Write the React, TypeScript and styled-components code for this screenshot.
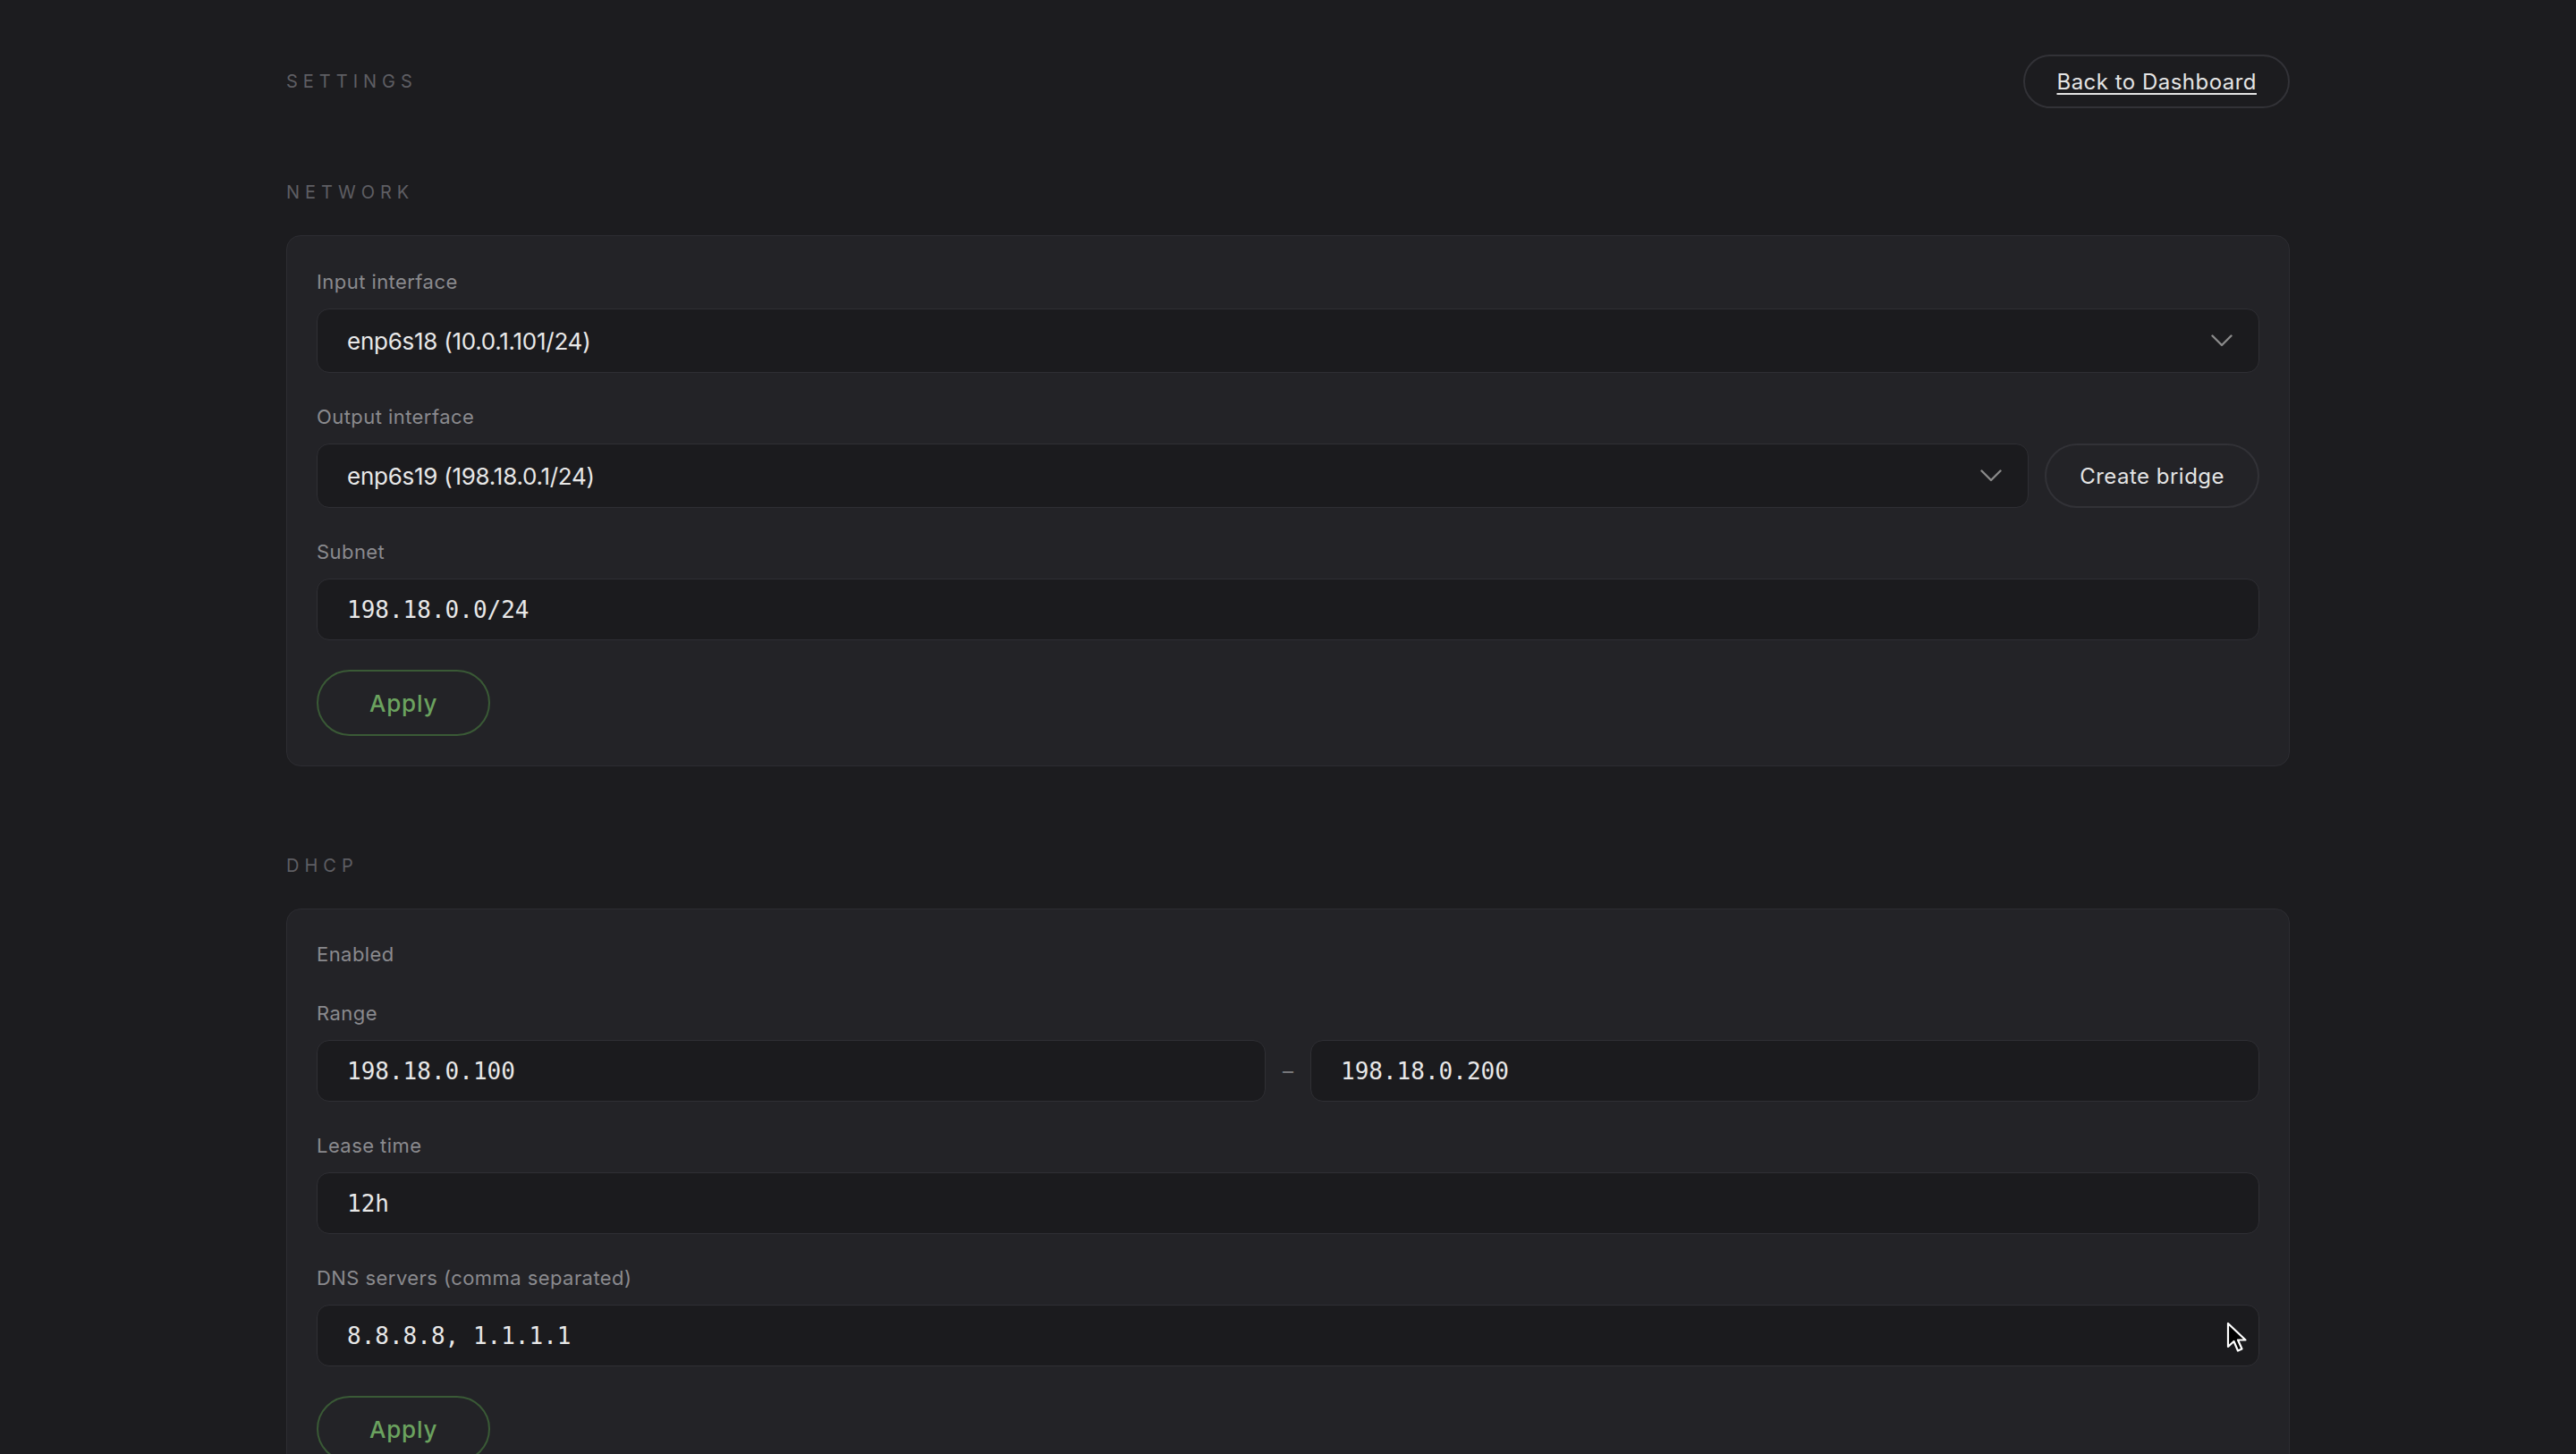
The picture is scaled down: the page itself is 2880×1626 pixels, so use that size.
import React from 'react'
import styled, { createGlobalStyle } from 'styled-components'

const GlobalStyle = createGlobalStyle`
    html, body {
        margin: 0;
        padding: 0;
        background: #1c1c1f;
    }
    body {
        font-family: Inter, "Noto Sans", sans-serif;
        color: #e6e6e6;
        -webkit-font-smoothing: antialiased;
    }
    * {
        box-sizing: border-box;
    }
`

const Page = styled.div`
    position: relative;
    min-height: 100vh;
    padding: 61px 0 120px;
`

const Container = styled.div`
    width: 2240px;
    margin: 0 auto;
`

const Header = styled.header`
    display: flex;
    justify-content: space-between;
    align-items: center;
    height: 60px;
    margin-bottom: 80px;
`

const Kicker = styled.h2`
    margin: 0;
    font-size: 20px;
    line-height: 28px;
    font-weight: 400;
    letter-spacing: 0.3em;
    text-transform: uppercase;
    color: #5e5e63;
`

const Section = styled.section`
    margin-bottom: 97px;

    ${Kicker} {
        margin-bottom: 34px;
    }
`

const Panel = styled.div`
    display: flex;
    flex-direction: column;
    gap: 31px;
    padding: 33px;
    background: #232327;
    border: 1px solid #2d2d32;
    border-radius: 16px;
`

const Field = styled.div`
    display: flex;
    flex-direction: column;
    gap: 12px;
`

const Label = styled.label`
    font-size: 22px;
    line-height: 36px;
    letter-spacing: 0.02em;
    color: #8a8a8e;
`

const ToggleLabel = styled.div`
    font-size: 22px;
    line-height: 34px;
    letter-spacing: 0.02em;
    color: #8a8a8e;
`

const SelectBox = styled.div`
    display: flex;
    align-items: center;
    justify-content: space-between;
    height: 72px;
    padding: 0 29px 0 33px;
    background: #1b1b1e;
    border: 1px solid #2f2f34;
    border-radius: 14px;
    font-size: 26px;
    letter-spacing: -0.01em;
    color: #e8e8e8;
`

const TextInput = styled.input`
    display: block;
    width: 100%;
    min-width: 0;
    height: 69px;
    padding: 0 33px;
    background: #1b1b1e;
    border: 1px solid #2f2f34;
    border-radius: 14px;
    font-family: "DejaVu Sans Mono", "Liberation Mono", monospace;
    font-size: 26px;
    color: #e8e8e8;
    outline: none;
`

const Row = styled.div`
    display: flex;
    align-items: center;
    gap: 18px;

    & > ${SelectBox}, & > ${TextInput} {
        flex: 1;
    }
`

const Dash = styled.span`
    width: 14px;
    text-align: center;
    font-size: 24px;
    color: #77777b;
`

const PillButton = styled.button<{ $height: number; $tone?: 'neutral' | 'green' }>`
    flex: none;
    height: ${p => p.$height}px;
    padding: 0 ${p => (p.$tone === 'green' ? 57 : 37)}px;
    border-radius: 999px;
    border: ${p => (p.$tone === 'green' ? '2px solid #3a5a36' : '2px solid #323237')};
    background: transparent;
    font-family: Inter, "Noto Sans", sans-serif;
    font-size: ${p => (p.$tone === 'green' ? 26 : 24)}px;
    font-weight: ${p => (p.$tone === 'green' ? 500 : 400)};
    letter-spacing: ${p => (p.$tone === 'green' ? '0.03em' : '0.02em')};
    color: ${p => (p.$tone === 'green' ? '#6ba25f' : '#e4e4e4')};
    white-space: nowrap;
    cursor: pointer;
`

const BackLink = styled(PillButton)`
    padding: 0 35px;
    text-decoration: underline;
    text-underline-offset: 4px;
    text-decoration-thickness: 2px;
`

const ApplyButton = styled(PillButton)`
    align-self: flex-start;
    margin-top: 2px;
`

const Pointer = styled.svg`
    position: absolute;
    left: 2489px;
    top: 1478px;
    pointer-events: none;
`

function Chevron() {
    return (
        <svg width="24" height="14" viewBox="0 0 24 14" fill="none">
            <polyline points="1.5,1.5 12,12 22.5,1.5" stroke="#8a8a8a" strokeWidth="2.4" strokeLinecap="round" strokeLinejoin="round" />
        </svg>
    )
}

function Select({ value }: { value: string }) {
    return (
        <SelectBox>
            <span>{value}</span>
            <Chevron />
        </SelectBox>
    )
}

function App() {
    return (
        <>
            <GlobalStyle />
            <Page>
                <Container>
                    <Header>
                        <Kicker as="h1">Settings</Kicker>
                        <BackLink $height={60}>Back to Dashboard</BackLink>
                    </Header>

                    <Section>
                        <Kicker>Network</Kicker>
                        <Panel>
                            <Field>
                                <Label>Input interface</Label>
                                <Select value="enp6s18 (10.0.1.101/24)" />
                            </Field>
                            <Field>
                                <Label>Output interface</Label>
                                <Row>
                                    <Select value="enp6s19 (198.18.0.1/24)" />
                                    <PillButton $height={72}>Create bridge</PillButton>
                                </Row>
                            </Field>
                            <Field>
                                <Label>Subnet</Label>
                                <TextInput readOnly value="198.18.0.0/24" />
                            </Field>
                            <ApplyButton $height={74} $tone="green">Apply</ApplyButton>
                        </Panel>
                    </Section>

                    <Section>
                        <Kicker>DHCP</Kicker>
                        <Panel>
                            <ToggleLabel>Enabled</ToggleLabel>
                            <Field>
                                <Label>Range</Label>
                                <Row>
                                    <TextInput readOnly value="198.18.0.100" />
                                    <Dash>–</Dash>
                                    <TextInput readOnly value="198.18.0.200" />
                                </Row>
                            </Field>
                            <Field>
                                <Label>Lease time</Label>
                                <TextInput readOnly value="12h" />
                            </Field>
                            <Field>
                                <Label>DNS servers (comma separated)</Label>
                                <TextInput readOnly value="8.8.8.8, 1.1.1.1" />
                            </Field>
                            <ApplyButton $height={74} $tone="green">Apply</ApplyButton>
                        </Panel>
                    </Section>
                </Container>

                <Pointer width="26" height="38" viewBox="0 0 26 38">
                    <path
                        d="M2 2 L2 28 L8.5 22 L13 32.5 L17.5 30.5 L13 20.5 L21.5 20.5 Z"
                        fill="#000"
                        stroke="#fff"
                        strokeWidth="2.2"
                        strokeLinejoin="round"
                    />
                </Pointer>
            </Page>
        </>
    )
}

export default App
